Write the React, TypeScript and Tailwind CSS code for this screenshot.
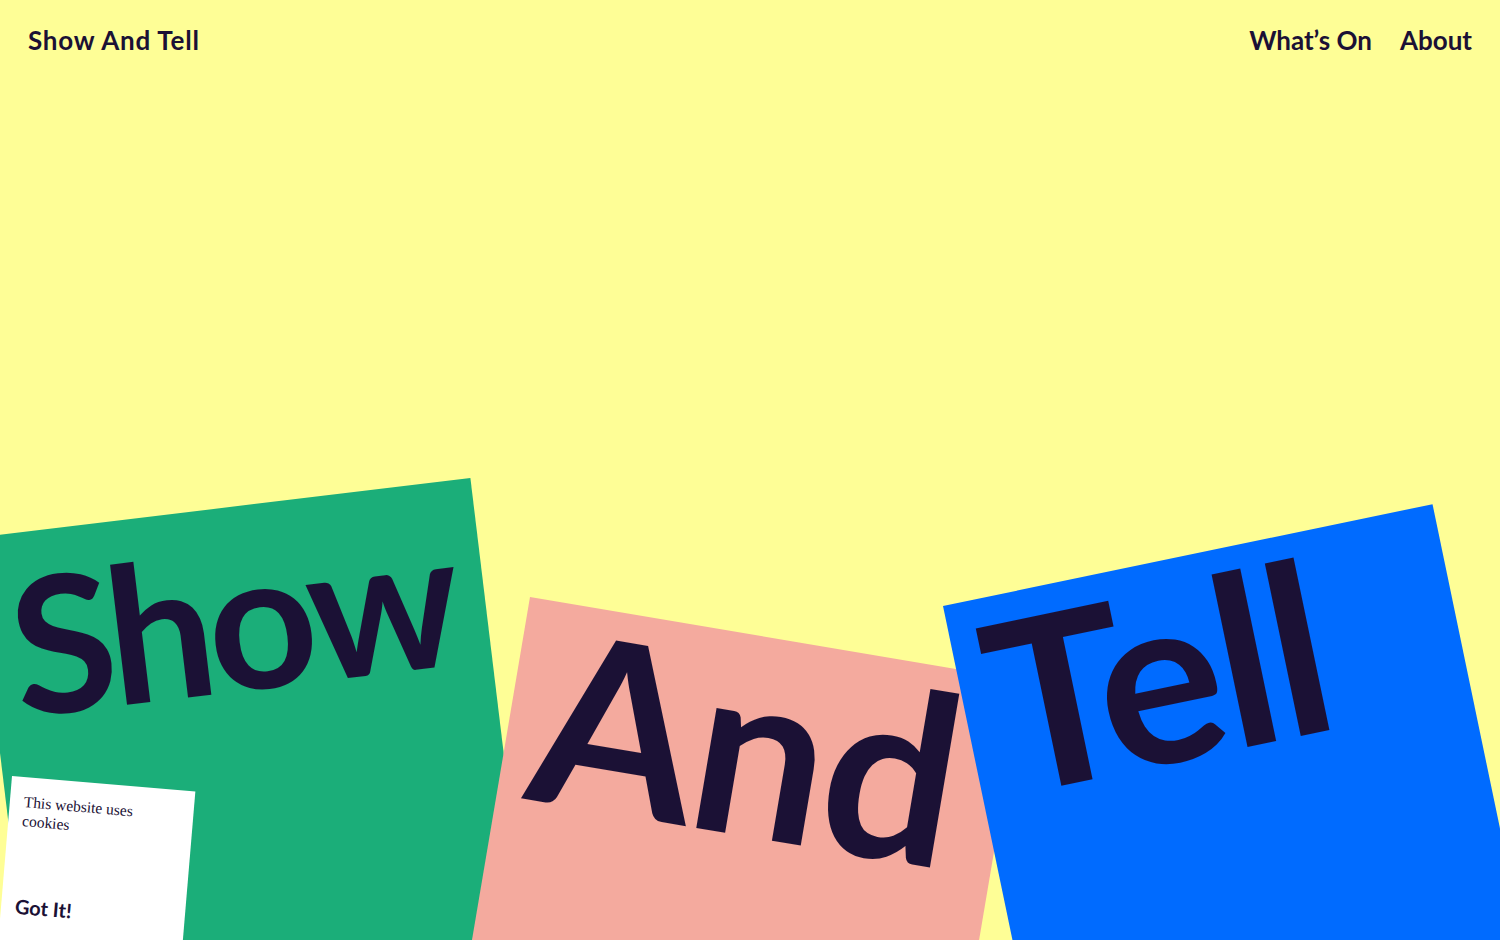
export default function App() {
  return (
    <div className="relative h-[940px] w-[1500px] overflow-hidden bg-[#fefe96] font-['Lato',sans-serif] text-[#1b1135]">
      <header className="relative z-50 flex items-start justify-between px-[28px] pt-[25px] text-[26px] font-bold leading-[1.2]">
        <a className="cursor-pointer tracking-[0.03em]">Show And Tell</a>
        <nav className="flex gap-[28px]">
          <a className="cursor-pointer">What’s On</a>
          <a className="cursor-pointer">About</a>
        </nav>
      </header>

      <div className="absolute left-[-26px] top-[538px] z-10 h-[600px] w-[500px] origin-top-left rotate-[-6.9deg] bg-[#1bae79]">
        <h2 className="pl-[24px] pt-[34px] text-[190px] font-bold leading-[0.8] tracking-[-0.035em]">Show</h2>
      </div>

      <div className="absolute left-[530px] top-[597px] z-20 h-[600px] w-[500px] origin-top-left rotate-[9.6deg] bg-[#f4aa9e]">
        <h2 className="pl-[26px] pt-[14px] text-[237px] font-bold leading-[0.8] tracking-[-0.01em]">And</h2>
      </div>

      <div className="absolute left-[943px] top-[606px] z-30 h-[600px] w-[500px] origin-top-left rotate-[-11.75deg] bg-[#006bff]">
        <h2 className="pl-[24px] pt-[14px] text-[237px] font-bold leading-[0.8] tracking-[-0.02em]">Tell</h2>
      </div>

      <div className="absolute left-[12px] top-[776px] z-40 flex h-[240px] w-[184px] origin-top-left rotate-[4.8deg] flex-col bg-white px-[14px] pt-[15px]">
        <p className="w-[125px] font-['Liberation_Serif',serif] text-[15.5px] leading-[19px]">This website uses cookies</p>
        <button className="mt-[64px] self-start text-left text-[20px] font-bold leading-[1.2]">Got It!</button>
      </div>
    </div>
  );
}
